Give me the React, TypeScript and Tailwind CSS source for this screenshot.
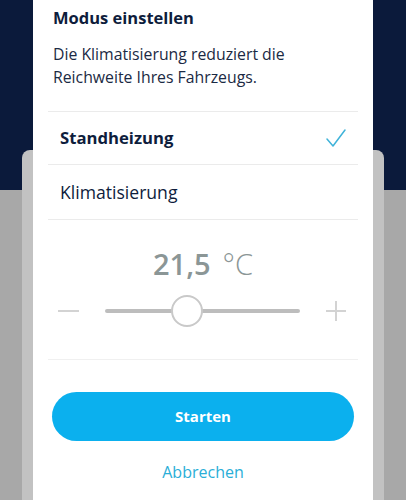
import React from "react";

export default function App() {
  const font = { fontFamily: '"Open Sans", "Noto Sans", sans-serif' };
  return (
    <div className="relative w-[406px] h-[500px] overflow-hidden bg-[#a8a8a8]" style={font}>
      {/* background page (dimmed) */}
      <div className="flex flex-col">
        <div className="h-[190px] bg-[#0b1a3b]" />
        <div className="mx-[22px] -mt-[40px] h-[360px] rounded-t-[8px] bg-[#c2c2c2]" />
      </div>

      {/* modal */}
      <div className="absolute top-0 bottom-0 left-[33px] w-[340px] bg-white flex flex-col">
        <div className="px-[20px] pt-[6px]">
          <div className="text-[16.5px] leading-[24px] font-bold text-[#0e1d3c]">Modus einstellen</div>
          <div className="mt-[13px] text-[15.8px] leading-[23px] text-[#1b2a44]">
            Die Klimatisierung reduziert die
            <br />
            Reichweite Ihres Fahrzeugs.
          </div>
        </div>

        <div className="mx-[15px] mt-[22px] flex flex-col">
          <div className="h-[1px] bg-[#ebebeb]" />
          <div className="h-[52px] flex items-center justify-between pl-[12px] pr-[12px]">
            <span className="text-[16.7px] font-bold text-[#0e1d3c]">Standheizung</span>
            <svg width="20" height="19" viewBox="0 0 20 19" fill="none">
              <path d="M1 10 L7 17 L19 1" stroke="#3fb3d9" strokeWidth="1.5" strokeLinecap="round" strokeLinejoin="round" />
            </svg>
          </div>
          <div className="h-[1px] bg-[#ebebeb]" />
          <div className="h-[54px] flex items-center pl-[12px]">
            <span className="text-[17.6px] text-[#0e1d3c]">Klimatisierung</span>
          </div>
          <div className="h-[1px] bg-[#ebebeb]" />

          <div className="h-[139px] flex flex-col items-center">
            <div className="mt-[27px] text-[29px] leading-[34px] text-[#8b9696]">
              <span className="font-semibold">21,5</span>
              <span className="ml-[12px] font-light">°C</span>
            </div>
            <div className="mt-[14px] w-full flex items-center h-[32px]">
              <div className="ml-[10px] w-[21px] h-[1.5px] bg-[#d3d3d3]" />
              <div className="relative ml-[26px] w-[195px] h-[4px] rounded-full bg-[#bdbdbd]">
                <div className="absolute left-[66px] top-[-14px] w-[32px] h-[32px] rounded-full bg-white border-2 border-[#c9c9c9]" />
              </div>
              <div className="relative ml-[26px] w-[20px] h-[20px]">
                <div className="absolute left-0 top-[9px] w-[20px] h-[1.5px] bg-[#d3d3d3]" />
                <div className="absolute left-[9px] top-0 w-[1.5px] h-[20px] bg-[#d3d3d3]" />
              </div>
            </div>
          </div>
          <div className="h-[1px] bg-[#f0f0f0]" />
        </div>

        <div className="px-[19px] mt-[32px]">
          <div className="h-[49px] rounded-full bg-[#0bb0ee] flex items-center justify-center">
            <span className="text-[15px] font-bold text-white">Starten</span>
          </div>
        </div>
        <div className="mt-[19px] text-center text-[16px] leading-[24px] text-[#2aaed7]">Abbrechen</div>
      </div>
    </div>
  );
}
